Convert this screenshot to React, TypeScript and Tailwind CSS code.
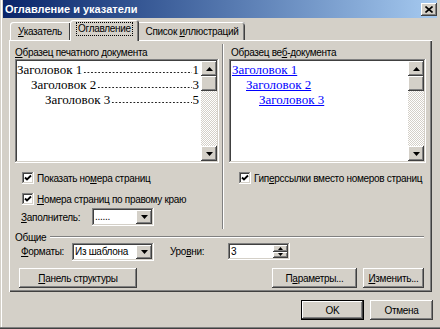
import React from "react";

const RAISED =
  "bg-[#d4d0c8] shadow-[inset_-1px_-1px_#404040,inset_1px_1px_#fff,inset_-2px_-2px_#808080,inset_2px_2px_#d4d0c8]";
const SUNKEN =
  "shadow-[inset_-1px_-1px_#fff,inset_1px_1px_#808080,inset_-2px_-2px_#d4d0c8,inset_2px_2px_#404040]";

function Arrow({ up = false }: { up?: boolean }) {
  return (
    <svg width="7" height="4" viewBox="0 0 7 4">
      {up ? <polygon points="0,4 7,4 3.5,0" fill="#000" /> : <polygon points="0,0 7,0 3.5,4" fill="#000" />}
    </svg>
  );
}

function Scrollbar() {
  return (
    <div className="w-[16px] flex flex-col">
      <div className={`h-[15px] flex items-center justify-center ${RAISED}`}>
        <Arrow up />
      </div>
      <div className={`h-[15px] ${RAISED}`} />
      <div className="flex-1 bg-[repeating-conic-gradient(#d4d0c8_0%_25%,#fff_0%_50%)] bg-[length:2px_2px]" />
      <div className={`h-[15px] flex items-center justify-center ${RAISED}`}>
        <Arrow />
      </div>
    </div>
  );
}

function Check({ label }: { label: React.ReactNode }) {
  return (
    <div className="flex items-center h-[12px]">
      <div className={`w-[12px] h-[12px] bg-white flex items-center justify-center ${SUNKEN}`}>
        <svg width="8" height="8" viewBox="0 0 8 8">
          <polyline points="1,3.5 3,5.5 7,1.5" fill="none" stroke="#000" strokeWidth="1.8" />
        </svg>
      </div>
      <span className="ml-[3px] whitespace-nowrap">{label}</span>
    </div>
  );
}

function Combo({ value, width }: { value: string; width: string }) {
  return (
    <div className={`${width} h-[18px] bg-white flex p-[2px] ${SUNKEN}`}>
      <span className="flex-1 pl-[1px] leading-[14px] whitespace-nowrap overflow-hidden">{value}</span>
      <div className={`w-[16px] flex items-center justify-center ${RAISED}`}>
        <Arrow />
      </div>
    </div>
  );
}

function Btn({ children, width, def = false }: { children: React.ReactNode; width: string; def?: boolean }) {
  return (
    <div className={`${width} h-[20px] flex items-center justify-center ${def ? "border border-black" : ""} ${RAISED}`}>
      {children}
    </div>
  );
}

const U = ({ children }: { children: React.ReactNode }) => <span className="underline">{children}</span>;

const PRINT = [
  { t: "Заголовок 1", n: "1", indent: "pl-0" },
  { t: "Заголовок 2", n: "3", indent: "pl-[14px]" },
  { t: "Заголовок 3", n: "5", indent: "pl-[28px]" },
];

export default function App() {
  return (
    <div className="w-[440px] h-[329px] overflow-hidden bg-[#d4d0c8] text-black text-[10px] tracking-[-0.3px] font-['Liberation_Sans',Arial,sans-serif] flex flex-col pb-[2px] shadow-[inset_0_-1px_#404040,inset_0_-2px_#808080,inset_1px_0_#d4d0c8,inset_2px_0_#fff]">
      {/* title bar */}
      <div className="h-[18px] mx-[3px] flex items-center bg-linear-to-r from-[#0a246a] to-[#a6caf0] pl-[2px]">
        <span className="flex-1 text-white font-bold text-[11px] tracking-normal leading-none">Оглавление и указатели</span>
        <div className={`w-[16px] h-[13px] flex items-center justify-center ${RAISED}`}>
          <svg width="8" height="7" viewBox="0 0 8 7">
            <path d="M0.5 0.5 L7.5 6.5 M7.5 0.5 L0.5 6.5" stroke="#000" strokeWidth="1.6" />
          </svg>
        </div>
      </div>

      <div className="pl-[9px] pr-[8px] pt-[2px] flex flex-col">
        {/* tabs */}
        <div className="h-[20px] flex items-end pl-[1px] relative z-10">
          <div className="w-[60px] h-[18px] flex items-center justify-center rounded-tl-[3px] shadow-[inset_1px_1px_#fff,inset_-1px_0_#404040]">
            <span>
              <U>У</U>казатель
            </span>
          </div>
          <div className="w-[69px] h-[21px] -mb-[1px] bg-[#d4d0c8] flex items-start justify-center pt-[3px] rounded-t-[3px] shadow-[inset_1px_1px_#fff,inset_-1px_0_#404040,inset_-2px_0_#808080]">
            <span className="outline outline-1 outline-dotted outline-black px-[1px] leading-[12px]">Оглавление</span>
          </div>
          <div className="w-[106px] h-[18px] flex items-center justify-center rounded-tr-[3px] shadow-[inset_0_1px_#fff,inset_-1px_0_#404040,inset_-2px_0_#808080]">
            <span>
              Список <U>и</U>ллюстраций
            </span>
          </div>
        </div>

        {/* panel */}
        <div className="h-[252px] flex flex-col pl-[6px] pr-[6px] pt-[5px] shadow-[inset_1px_1px_#fff,inset_-1px_-1px_#404040,inset_-2px_-2px_#808080]">
          <div className="h-[185px] flex">
            {/* left column */}
            <div className="w-[204px] flex flex-col pt-[2px]">
              <div className="h-[12px] leading-[11px]">
                <U>О</U>бразец печатного документа
              </div>
              <div className={`h-[104px] bg-white flex p-[2px] ${SUNKEN}`}>
                <div className="flex-1 pt-[1px] pr-[2px] font-['Liberation_Serif','Times_New_Roman',serif] text-[13px] tracking-normal leading-[15px]">
                  {PRINT.map((r) => (
                    <div key={r.t} className={`flex items-end ${r.indent}`}>
                      <span className="whitespace-nowrap">{r.t}</span>
                      <span className="flex-1 h-[3px] mb-[3px] mx-[1px] bg-[radial-gradient(circle,#222_0.5px,transparent_0.8px)] bg-[length:3.6px_3px]" />
                      <span>{r.n}</span>
                    </div>
                  ))}
                </div>
                <Scrollbar />
              </div>
              <div className="mt-[9px] ml-[7px]">
                <Check
                  label={
                    <>
                      Показать но<U>м</U>ера страниц
                    </>
                  }
                />
              </div>
              <div className="mt-[9px] ml-[7px]">
                <Check
                  label={
                    <>
                      <U>Н</U>омера страниц по правому краю
                    </>
                  }
                />
              </div>
              <div className="mt-[3px] ml-[6px] flex items-center">
                <span className="w-[71px]">
                  <U>З</U>аполнитель:
                </span>
                <Combo value=" ......" width="w-[62px]" />
              </div>
            </div>

            {/* divider */}
            <div className="ml-[3px] mr-[5px] w-[2px] -mt-[1px] mb-[1px] shadow-[inset_1px_0_#808080,inset_-1px_0_#fff]" />

            {/* right column */}
            <div className="w-[197px] flex flex-col pt-[2px]">
              <div className="h-[12px] leading-[11px] pl-[2px]">
                Образец ве<U>б</U>-документа
              </div>
              <div className={`h-[104px] bg-white flex p-[2px] ${SUNKEN}`}>
                <div className="flex-1 pt-[1px] pl-[1px] font-['Liberation_Serif','Times_New_Roman',serif] text-[13px] tracking-normal leading-[15px] text-[#0000ff]">
                  <div className="underline">Заголовок 1</div>
                  <div className="pl-[14px]">
                    <span className="underline">Заголовок 2</span>
                  </div>
                  <div className="pl-[27px]">
                    <span className="underline">Заголовок 3</span>
                  </div>
                </div>
                <Scrollbar />
              </div>
              <div className="mt-[9px] ml-[10px]">
                <Check
                  label={
                    <>
                      Гип<U>е</U>рссылки вместо номеров страниц
                    </>
                  }
                />
              </div>
            </div>
          </div>

          {/* group: Общие */}
          <div className="h-[12px] mt-[1px] flex items-center">
            <span className="pr-[4px]">Общие</span>
            <div className="flex-1 mr-[2px] h-[2px] shadow-[inset_0_1px_#808080,inset_0_-1px_#fff]" />
          </div>

          <div className="h-[17px] flex items-center ml-[6px]">
            <span className="w-[51px]">
              <U>Ф</U>орматы:
            </span>
            <Combo value="Из шаблона" width="w-[82px]" />
            <span className="ml-[16px] w-[58px]">
              Уро<U>в</U>ни:
            </span>
            <div className={`w-[62px] h-[17px] bg-white flex p-[2px] ${SUNKEN}`}>
              <span className="flex-1 pl-[1px] leading-[13px]">3</span>
              <div className="w-[15px] flex flex-col">
                <div className={`flex-1 flex items-center justify-center ${RAISED}`}>
                  <svg width="5" height="3" viewBox="0 0 5 3">
                    <polygon points="0,3 5,3 2.5,0" fill="#000" />
                  </svg>
                </div>
                <div className={`flex-1 flex items-center justify-center ${RAISED}`}>
                  <svg width="5" height="3" viewBox="0 0 5 3">
                    <polygon points="0,0 5,0 2.5,3" fill="#000" />
                  </svg>
                </div>
              </div>
            </div>
          </div>

          <div className="mt-[8px] flex ml-[4px] mr-[2px]">
            <Btn width="w-[118px]">
              <span>
                <U>П</U>анель структуры
              </span>
            </Btn>
            <div className="flex-1" />
            <Btn width="w-[85px]">
              <span>
                П<U>а</U>раметры...
              </span>
            </Btn>
            <div className="w-[6px]" />
            <Btn width="w-[61px]">
              <span>
                <U>И</U>зменить...
              </span>
            </Btn>
          </div>
        </div>
      </div>

      {/* dialog buttons */}
      <div className="mt-[8px] flex justify-end pr-[7px] gap-[6px]">
        <Btn width="w-[63px]" def>
          OK
        </Btn>
        <Btn width="w-[63px]">Отмена</Btn>
      </div>
    </div>
  );
}
